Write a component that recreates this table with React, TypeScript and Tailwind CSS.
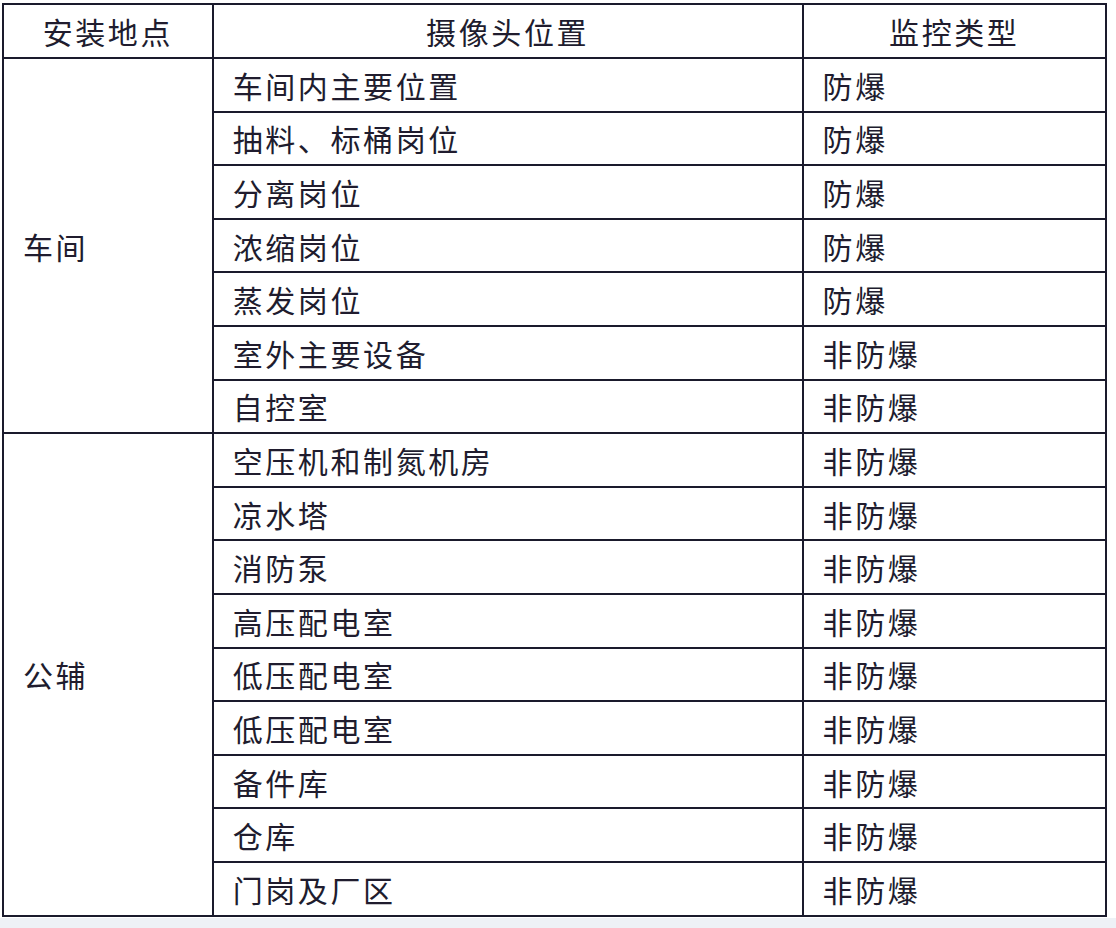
import React from "react";

const groups: { name: string; rows: [string, string][] }[] = [
  {
    name: "车间",
    rows: [
      ["车间内主要位置", "防爆"],
      ["抽料、标桶岗位", "防爆"],
      ["分离岗位", "防爆"],
      ["浓缩岗位", "防爆"],
      ["蒸发岗位", "防爆"],
      ["室外主要设备", "非防爆"],
      ["自控室", "非防爆"],
    ],
  },
  {
    name: "公辅",
    rows: [
      ["空压机和制氮机房", "非防爆"],
      ["凉水塔", "非防爆"],
      ["消防泵", "非防爆"],
      ["高压配电室", "非防爆"],
      ["低压配电室", "非防爆"],
      ["低压配电室", "非防爆"],
      ["备件库", "非防爆"],
      ["仓库", "非防爆"],
      ["门岗及厂区", "非防爆"],
    ],
  },
];

export default function App() {
  return (
    <div
      className="w-[1116px] h-[928px] bg-white flex flex-col text-[#201c2e]"
      style={{ fontFamily: '"Noto Sans CJK SC", "Noto Sans", sans-serif' }}
    >
      <div className="pl-[2px] pt-[3px] flex-1">
        <table className="w-[1105px] border-collapse border-2 border-[#1a1a2c] text-[30px] tracking-[2.6px] leading-none">
          <colgroup>
            <col className="w-[210px]" />
            <col className="w-[591px]" />
            <col className="w-[304px]" />
          </colgroup>
          <thead>
            <tr className="h-[54px]">
              <th className="border-2 border-[#1a1a2c] font-normal text-center">安装地点</th>
              <th className="border-2 border-[#1a1a2c] font-normal text-center">摄像头位置</th>
              <th className="border-2 border-[#1a1a2c] font-normal text-center">监控类型</th>
            </tr>
          </thead>
          <tbody>
            {groups.map((g) =>
              g.rows.map((r, i) => (
                <tr key={g.name + i} className="h-[53.6px]">
                  {i === 0 && (
                    <td
                      rowSpan={g.rows.length}
                      className="border-2 border-[#1a1a2c] pl-[19px] align-middle"
                    >
                      {g.name}
                    </td>
                  )}
                  <td className="border-2 border-[#1a1a2c] pl-[19px] align-middle">{r[0]}</td>
                  <td className="border-2 border-[#1a1a2c] pl-[19px] align-middle">{r[1]}</td>
                </tr>
              ))
            )}
          </tbody>
        </table>
      </div>
      <div className="h-[10px] bg-[#eef1f6]" />
    </div>
  );
}
